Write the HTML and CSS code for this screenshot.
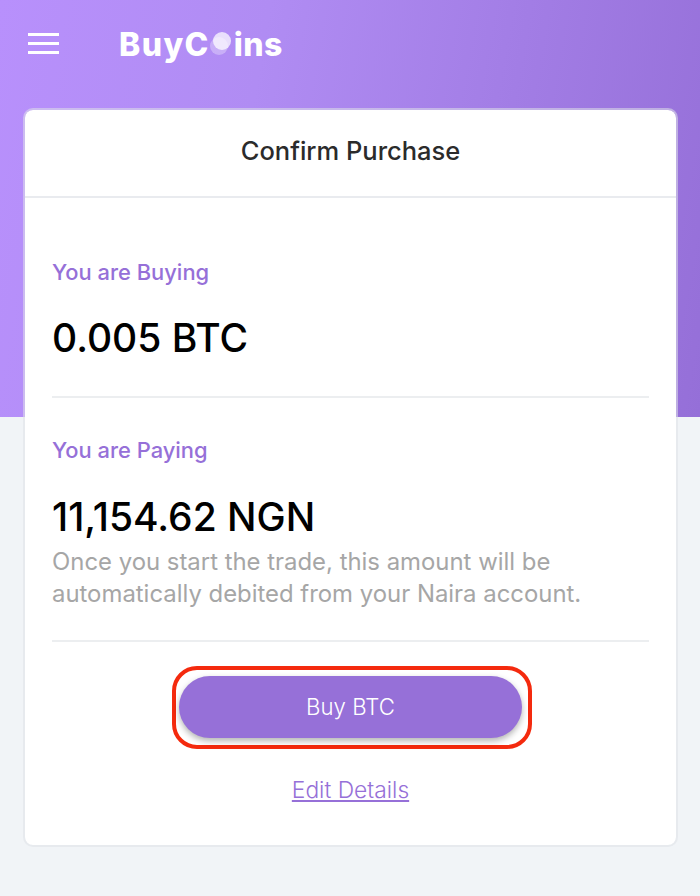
FILE: index.html
```html
<!DOCTYPE html>
<html lang="en">
<head>
<meta charset="utf-8">
<title>BuyCoins - Confirm Purchase</title>
<link rel="stylesheet" href="styles.css">
</head>
<body>
<div class="hero"></div>
<div class="page">
  <header class="topbar">
    <button class="menu" aria-label="Menu"><span></span><span></span><span></span></button>
    <div class="logo"><span class="logo-start">BuyC</span><span class="coin"><svg viewBox="0 0 22 26" width="22" height="26"><circle cx="9" cy="15" r="9" fill="#fff" fill-opacity=".3"/><circle cx="12" cy="10" r="9" fill="#fff" fill-opacity=".72"/></svg></span><span>ins</span></div>
  </header>
  <main class="card">
    <h1 class="card-title">Confirm Purchase</h1>
    <div class="card-body">
      <section class="row row-buy">
        <h2 class="label">You are Buying</h2>
        <p class="amount">0.005 BTC</p>
      </section>
      <section class="row row-pay">
        <h2 class="label">You are Paying</h2>
        <p class="amount amount-pay">11,154.62 NGN</p>
        <p class="note">Once you start the trade, this amount will be automatically debited from your Naira account.</p>
      </section>
      <div class="actions">
        <div class="highlight"><button class="buy">Buy BTC</button></div>
        <a class="edit" href="#">Edit Details</a>
      </div>
    </div>
  </main>
</div>
</body>
</html>
```
FILE: styles.css
```css
* { box-sizing: border-box; }
html, body { margin: 0; height: 896px; overflow: hidden; }
body { position: relative; background: #f1f4f7; font-family: Inter, "Liberation Sans", sans-serif; }
.hero { position: absolute; top: 0; left: 0; right: 0; height: 417px; background: linear-gradient(100deg, #b890fc 0%, #b08cf3 35%, #956fd8 100%); }
.page { position: relative; display: flex; flex-direction: column; padding: 0 22px 0 23px; }
.topbar { height: 108px; display: flex; align-items: flex-start; }
.menu { width: 31px; height: 21px; margin: 33px 0 0 5px; padding: 0; border: 0; background: none; display: flex; flex-direction: column; justify-content: space-between; }
.menu span { display: block; height: 3px; background: #fff; }
.logo { margin: 24px 0 0 60px; display: flex; align-items: center; height: 40px; color: #fff; font-weight: 800; font-size: 32px; letter-spacing: 0.4px; }
.logo-start { letter-spacing: 1.4px; }
.coin { display: block; width: 22px; height: 26px; margin: 0 2px 0 0; }
.coin svg { display: block; }
.card { height: 739px; background: #fff; border: 2px solid rgba(222, 225, 231, .55); border-radius: 10px; background-clip: padding-box; }
.card-title { margin: 0; height: 88px; padding-bottom: 5px; display: flex; align-items: center; justify-content: center; border-bottom: 2px solid #e9ebef; color: #2b2b2b; font-size: 25.500px; font-weight: 500; }
.card-body { padding: 0 27px; }
.row { border-bottom: 2px solid #eceef0; }
.row-buy { height: 200px; padding-top: 60px; }
.row-pay { height: 244px; padding-top: 38px; }
.label { margin: 0; font-size: 21.900px; line-height: 28px; font-weight: 500; color: #9670d8; }
.amount { margin: 29px 0 0; font-size: 39px; line-height: 46px; font-weight: 500; color: #000; }
.amount-pay { margin-top: 30px; }
.note { margin: 6px 0 0; font-size: 23.900px; line-height: 32px; color: #a6a6a6; }
.actions { display: flex; flex-direction: column; align-items: center; }
.highlight { align-self: flex-start; margin: 24px 0 0 120px; width: 360px; height: 83px; padding: 6px 0 0 3px; border: 4px solid #f42a0e; border-radius: 25px; }
.buy { display: block; width: 343px; height: 62px; padding: 0 0 2px; border: 0; border-radius: 31px; background: #9670d8; color: #fff; font: 300 22.200px Inter, "Liberation Sans", sans-serif; box-shadow: 0 3px 6px rgba(0, 0, 0, .3); }
.edit { margin-top: 27px; font-size: 22.800px; line-height: 28px; font-weight: 300; color: #9670d8; text-decoration: underline; }
```
